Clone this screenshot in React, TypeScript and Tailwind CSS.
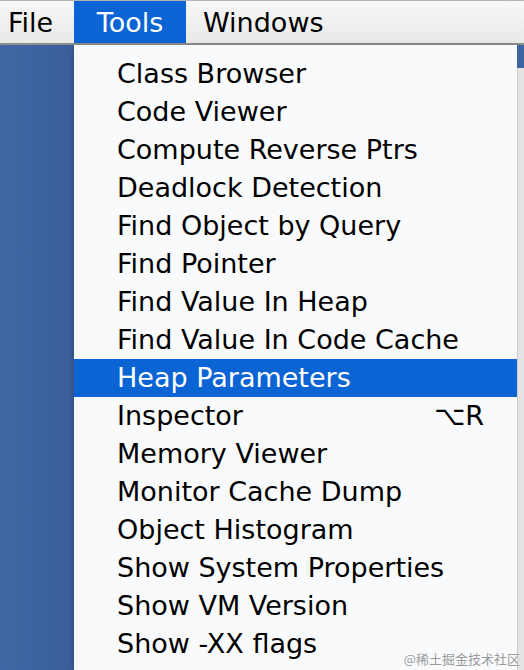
const ITEMS: { label: string; shortcut?: string }[] = [
  { label: "Class Browser" },
  { label: "Code Viewer" },
  { label: "Compute Reverse Ptrs" },
  { label: "Deadlock Detection" },
  { label: "Find Object by Query" },
  { label: "Find Pointer" },
  { label: "Find Value In Heap" },
  { label: "Find Value In Code Cache" },
  { label: "Heap Parameters" },
  { label: "Inspector", shortcut: "⌥R" },
  { label: "Memory Viewer" },
  { label: "Monitor Cache Dump" },
  { label: "Object Histogram" },
  { label: "Show System Properties" },
  { label: "Show VM Version" },
  { label: "Show -XX flags" },
];

const SELECTED = "Heap Parameters";

const App = () => (
  <div
    className="relative w-[524px] h-[670px] overflow-hidden bg-[#3f64a2] text-[27px] text-black"
    style={{ fontFamily: '"DejaVu Sans", Verdana, sans-serif' }}
  >
    {/* menu bar */}
    <div className="flex h-[45px] border-t border-[#b5b5b5] border-b-2 border-b-[#8e8e8e] bg-gradient-to-b from-[#f7f7f7] to-[#e9e9e9]">
      <div className="w-[74px] pl-2 pt-[2px] flex items-center">File</div>
      <div className="w-[112px] pt-[2px] flex items-center justify-center bg-[#0a64d4] text-white">
        Tools
      </div>
      <div className="pl-[17px] pt-[2px] flex items-center">Windows</div>
    </div>

    <div className="flex h-[625px]">
      {/* desktop on the left */}
      <div className="w-[74px] bg-gradient-to-r from-[#4167a5] to-[#3a5e9c]" />

      {/* dropdown */}
      <div className="w-[443px] bg-[#f9fafc] pt-[10px] shadow-[0_2px_6px_rgba(0,0,0,0.3)]">
        {ITEMS.map((item) => (
          <div
            key={item.label}
            className={`h-[38px] flex items-center justify-between pl-[43px] pr-[33px] ${
              item.label === SELECTED ? "bg-[#0a64d4] text-white" : ""
            }`}
          >
            <span>{item.label}</span>
            {item.shortcut && <span>{item.shortcut}</span>}
          </div>
        ))}
      </div>

      {/* edge of the window behind */}
      <div className="flex-1 flex flex-col">
        <div className="h-[23px] bg-[#3f64a2]" />
        <div className="flex-1 bg-[#e4e4e4] border-l border-[#cfcfcf]" />
      </div>
    </div>

    <div
      className="absolute right-[4px] bottom-[2px] text-[13px] text-[#9a9a9a]"
      style={{ fontFamily: '"Noto Sans CJK SC", sans-serif' }}
    >
      @稀土掘金技术社区
    </div>
  </div>
);

export default App;
